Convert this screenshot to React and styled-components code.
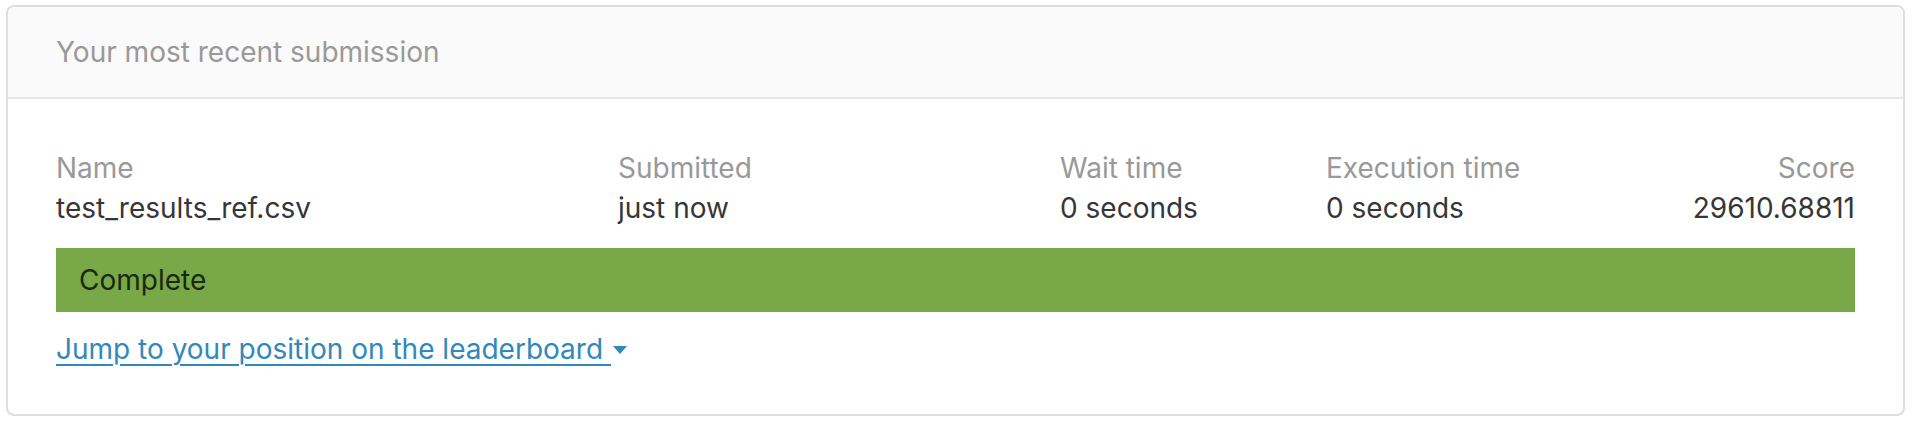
import styled, { createGlobalStyle } from "styled-components";

const GlobalStyle = createGlobalStyle`
	html, body {
		margin: 0;
		padding: 0;
		background: #ffffff;
	}
	body {
		font-family: "Inter", "Liberation Sans", sans-serif;
		-webkit-font-smoothing: antialiased;
	}
`;

const columns = [
	{ label: "Name", value: "test_results_ref.csv" },
	{ label: "Submitted", value: "just now" },
	{ label: "Wait time", value: "0 seconds" },
	{ label: "Execution time", value: "0 seconds" },
	{ label: "Score", value: "29610.68811", right: true },
];

const App = () => {
	return (
		<Page>
			<GlobalStyle />
			<Card>
				<CardHeader>Your most recent submission</CardHeader>
				<CardBody>
					<InfoTable>
						{columns.map((col) => (
							<Column key={col.label} $right={col.right}>
								<Label>{col.label}</Label>
								<Value>{col.value}</Value>
							</Column>
						))}
					</InfoTable>
					<StatusBar>Complete</StatusBar>
					<JumpLink href="#">
						<span className="link-text">Jump to your position on the leaderboard </span>
						<Caret viewBox="0 0 14 8" aria-hidden="true">
							<path d="M0 0 L14 0 L7 8 Z" fill="currentColor" />
						</Caret>
					</JumpLink>
				</CardBody>
			</Card>
		</Page>
	);
};

const Page = styled.div`
	padding: 5px 13px 12px 6px;
`;

const Card = styled.section`
	border: 2px solid #dedede;
	border-radius: 8px;
	overflow: hidden;
	background: #ffffff;
`;

const CardHeader = styled.header`
	display: flex;
	align-items: center;
	height: 90px;
	padding: 0 48px;
	background: #fafafa;
	border-bottom: 2px solid #e6e6e6;
	color: #999999;
	font-size: 28px;
	line-height: 40px;
`;

const CardBody = styled.div`
	padding: 49px 48px 45px;
`;

const InfoTable = styled.div`
	display: grid;
	grid-template-columns: 562px 442px 266px 1fr auto;
`;

const Column = styled.div`
	display: flex;
	flex-direction: column;
	text-align: ${({ $right }) => ($right ? "right" : "left")};
	font-size: 28px;
	line-height: 40px;
`;

const Label = styled.span`
	color: #999999;
`;

const Value = styled.span`
	color: #363636;
`;

const StatusBar = styled.div`
	margin-top: 20px;
	height: 64px;
	padding: 0 23px;
	display: flex;
	align-items: center;
	background: #78a848;
	color: #1a280f;
	font-size: 28px;
	line-height: 40px;
`;

const JumpLink = styled.a`
	display: inline-flex;
	align-items: center;
	margin-top: 17px;
	color: #3188bb;
	font-size: 28px;
	line-height: 40px;
	text-decoration: none;

	.link-text {
		text-decoration: underline;
		text-decoration-thickness: 2px;
		text-underline-offset: 5px;
		white-space: pre;
	}
`;

const Caret = styled.svg`
	width: 14px;
	height: 8px;
	margin-left: 2px;
	margin-top: 1px;
`;

export default App;
